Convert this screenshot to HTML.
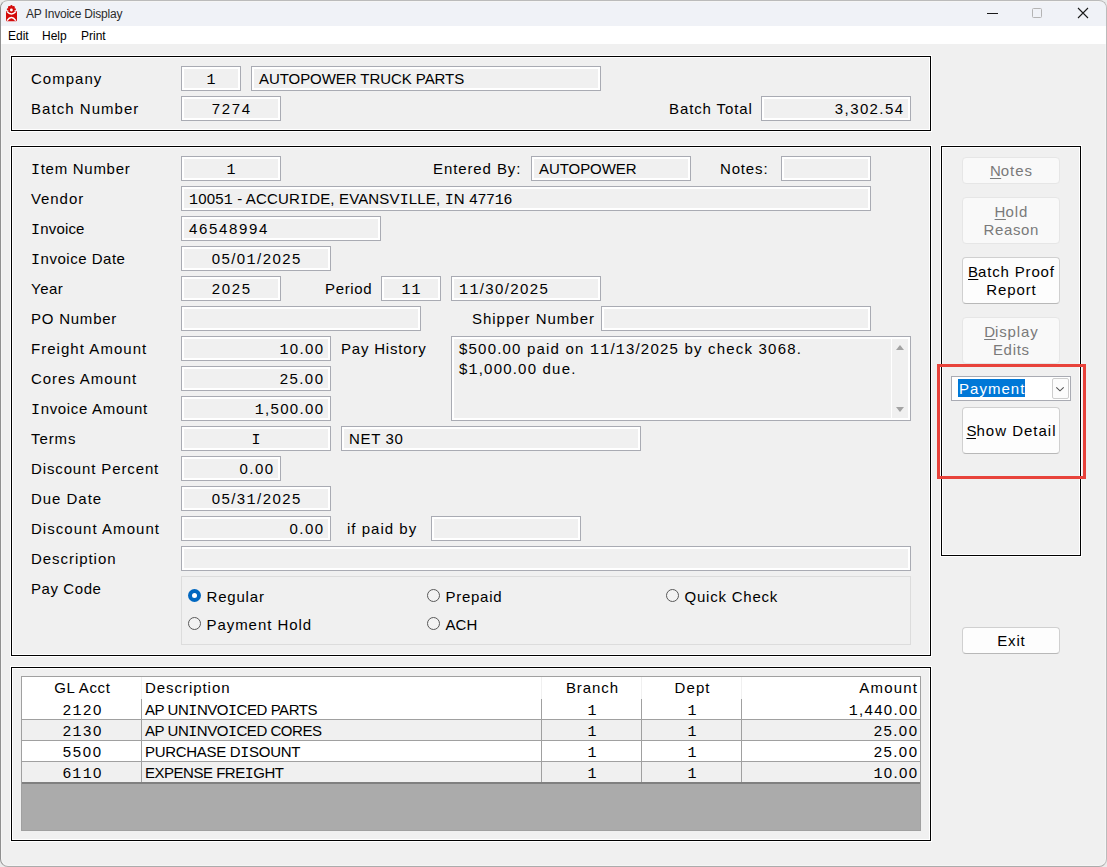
<!DOCTYPE html>
<html><head><meta charset="utf-8"><title>AP Invoice Display</title>
<style>
*{margin:0;padding:0;box-sizing:border-box}
html,body{width:1107px;height:867px;overflow:hidden;background:#ebebeb;font-family:"Liberation Sans", sans-serif;}
body{position:relative;color:#000;font-size:15px}
i.m{font-style:normal;font-family:"Liberation Mono", monospace}
u{text-decoration:underline;text-underline-offset:2px;text-decoration-thickness:1px}
#win{position:absolute;left:0;top:0;width:1107px;height:867px;border:1px solid #bbb;border-left-color:#909090;border-bottom-color:#acacac;border-radius:8px;background:#f0f0f0;overflow:hidden;box-shadow:inset 0 0 0 1px #f5f5f5}
#title{z-index:0}
#title{position:absolute;left:0;top:1px;width:100%;height:24px;background:#f0f2f7}
#menu{position:absolute;left:0;top:25px;width:100%;height:18px;background:#fff}
.tt,.mn{position:absolute;font-size:12px;line-height:14px;color:#000;white-space:nowrap}
.tt{color:#2b2b2b}
.g{position:absolute;border:1px solid #000;box-shadow:0 0 0 1px #fff, inset 0 0 0 1px #fff}
.l{position:absolute;line-height:25px;white-space:nowrap}
.f{position:absolute;border:1px solid #a9abb3;box-shadow:inset 0 0 0 2px #fff;background:#f0f0f0;line-height:23px;white-space:nowrap;overflow:hidden}
.ta{position:absolute;border:1px solid #a9abb3;box-shadow:inset 0 0 0 2px #fff;background:#f0f0f0;line-height:18px;padding:3px 0 0 7px;white-space:nowrap;overflow:hidden}
.sb{position:absolute;right:2px;top:2px;width:17px;height:79px;border-left:1px solid #fff;background:#f0f0f0}
.up,.dn{position:absolute;left:4px;width:0;height:0;border-left:4px solid transparent;border-right:4px solid transparent}
.up{top:6px;border-bottom:5px solid #a3a3a3}
.dn{top:68px;border-top:5px solid #a3a3a3}
.pc{position:absolute;border:1px solid #dcdcdc}
.rd{position:absolute;width:13px;height:13px;border-radius:50%;border:1px solid #595959;background:#f3f3f3}
.rd.on{border:none;background:#0067c0}
.rd.on::after{content:"";position:absolute;left:4px;top:4px;width:5px;height:5px;border-radius:50%;background:#fff}
.bt{position:absolute;border:1px solid #d0d0d0;border-bottom-color:#b8b8b8;border-radius:4px;background:#fdfdfd;display:flex;align-items:center;justify-content:center;text-align:center;line-height:18px;white-space:nowrap}
.bt.dis{border-color:#e6e6e6;background:#f9f9f9;color:#7a7a7a}
.dd{position:absolute;border:1px solid #a9abb3;background:#fff}
.sel{position:absolute;left:6px;top:2px;height:18px;line-height:19.6px;overflow:hidden;background:#0078d7;color:#fff;padding:0 1px;white-space:nowrap}
.ddb{position:absolute;right:1px;top:1px;width:17px;height:21px;border:1px solid #cdcdcd;border-radius:2px;background:#fcfcfc}
.ddb svg{position:absolute;left:0;top:0}
.red{position:absolute;border:3px solid #e8433b}
.grid{position:absolute;border:1px solid #a0a0a0;background:#ababab}
.gh,.gr{position:absolute;background:#fff}
.gc{position:absolute;height:21px;line-height:21px;white-space:nowrap}
</style></head><body>
<div id="win"><div id="title"></div><div id="menu"></div></div>
<svg style="position:absolute;left:4px;top:3px" width="16" height="20" viewBox="0 0 16 20">
<rect x="2" y="8" width="11" height="10.2" rx="1" fill="#d40b0b"/>
<circle cx="7.4" cy="6.3" r="3.3" fill="#d40b0b"/>
<circle cx="7.4" cy="3.1" r="1.1" fill="#d40b0b"/><circle cx="5.1" cy="4.2" r="1.1" fill="#d40b0b"/><circle cx="9.7" cy="4.2" r="1.1" fill="#d40b0b"/>
<circle cx="3.9" cy="6.3" r="1.1" fill="#d40b0b"/><circle cx="10.9" cy="6.3" r="1.1" fill="#d40b0b"/>
<circle cx="7.4" cy="7.0" r="1.4" fill="#fff"/>
<path d="M3 8.6 Q7.4 13.6 11.8 8.6" stroke="#fff" stroke-width="1.5" fill="none"/>
<path d="M3 17.6 Q7.4 11.6 11.8 17.6" stroke="#fff" stroke-width="1.5" fill="none"/>
</svg>
<div class="tt" style="left:26px;top:7px;letter-spacing:-0.2px">AP Invoice Display</div>
<div class="mn" style="left:8px;top:29px">Edit</div>
<div class="mn" style="left:42px;top:29px">Help</div>
<div class="mn" style="left:81px;top:29px">Print</div>
<div style="position:absolute;left:987px;top:13px;width:11px;height:1px;background:#1a1a1a"></div>
<div style="position:absolute;left:1032px;top:8px;width:10px;height:10px;border:1px solid #b4b4b4;border-radius:1.5px"></div>
<svg style="position:absolute;left:1077px;top:7px" width="12" height="12" viewBox="0 0 12 12"><path d="M1 1 L11 11 M11 1 L1 11" stroke="#1a1a1a" stroke-width="1.1"/></svg>
<div class="g" style="left:11px;top:56px;width:920px;height:75px"></div>
<div class="l" style="left:31px;top:66px"><span style="letter-spacing:1.02px;margin-right:-1.02px;">Company</span></div>
<div class="f" style="left:181px;top:66px;width:60px;height:25px;text-align:center;"><span style="letter-spacing:1.00px;margin-right:-1.00px;"><i class="m">1</i></span></div>
<div class="f" style="left:251px;top:66px;width:350px;height:25px;text-align:left;padding-left:7px;"><span style="letter-spacing:-0.06px;margin-right:0.06px;">AUTOPOWER TRUCK PARTS</span></div>
<div class="l" style="left:31px;top:96px"><span style="letter-spacing:1.04px;margin-right:-1.04px;">Batch Number</span></div>
<div class="f" style="left:181px;top:96px;width:100px;height:25px;text-align:center;"><span style="letter-spacing:1.66px;margin-right:-1.66px;">7274</span></div>
<div class="l" style="left:669px;top:96px"><span style="letter-spacing:0.89px;margin-right:-0.89px;">Batch Total</span></div>
<div class="f" style="left:761px;top:96px;width:150px;height:25px;text-align:right;padding-right:7px;"><span style="letter-spacing:1.39px;margin-right:-1.39px;">3,302.54</span></div>
<div class="g" style="left:11px;top:146px;width:920px;height:510px"></div>
<div class="l" style="left:31px;top:156px"><span style="letter-spacing:0.72px;margin-right:-0.72px;"><i class="m">I</i>tem Number</span></div>
<div class="f" style="left:181px;top:156px;width:100px;height:25px;text-align:center;"><span style="letter-spacing:1.00px;margin-right:-1.00px;"><i class="m">1</i></span></div>
<div class="l" style="left:433px;top:156px"><span style="letter-spacing:0.90px;margin-right:-0.90px;">Entered By:</span></div>
<div class="f" style="left:531px;top:156px;width:160px;height:25px;text-align:left;padding-left:7px;"><span style="letter-spacing:-0.06px;margin-right:0.06px;">AUTOPOWER</span></div>
<div class="l" style="left:720px;top:156px"><span style="letter-spacing:0.84px;margin-right:-0.84px;">Notes:</span></div>
<div class="f" style="left:781px;top:156px;width:90px;height:25px;text-align:left;padding-left:7px;"></div>
<div class="l" style="left:31px;top:186px"><span style="letter-spacing:0.92px;margin-right:-0.92px;">Vendor</span></div>
<div class="f" style="left:181px;top:186px;width:690px;height:25px;text-align:left;padding-left:7px;"><span style="letter-spacing:0.16px;margin-right:-0.16px;"><i class="m">1</i>005<i class="m">1</i> - ACCUR<i class="m">I</i>DE, EVANSV<i class="m">I</i>LLE, <i class="m">I</i>N 477<i class="m">1</i>6</span></div>
<div class="l" style="left:31px;top:216px"><span style="letter-spacing:0.18px;margin-right:-0.18px;"><i class="m">I</i>nvoice</span></div>
<div class="f" style="left:181px;top:216px;width:200px;height:25px;text-align:left;padding-left:7px;"><span style="letter-spacing:1.66px;margin-right:-1.66px;">46548994</span></div>
<div class="l" style="left:31px;top:246px"><span style="letter-spacing:0.52px;margin-right:-0.52px;"><i class="m">I</i>nvoice Date</span></div>
<div class="f" style="left:181px;top:246px;width:150px;height:25px;text-align:center;"><span style="letter-spacing:1.44px;margin-right:-1.44px;">05/0<i class="m">1</i>/2025</span></div>
<div class="l" style="left:31px;top:276px"><span style="letter-spacing:0.52px;margin-right:-0.52px;">Year</span></div>
<div class="f" style="left:181px;top:276px;width:100px;height:25px;text-align:center;"><span style="letter-spacing:1.66px;margin-right:-1.66px;">2025</span></div>
<div class="l" style="left:325px;top:276px"><span style="letter-spacing:0.66px;margin-right:-0.66px;">Period</span></div>
<div class="f" style="left:381px;top:276px;width:60px;height:25px;text-align:center;"><span style="letter-spacing:1.00px;margin-right:-1.00px;"><i class="m">1</i><i class="m">1</i></span></div>
<div class="f" style="left:451px;top:276px;width:150px;height:25px;text-align:left;padding-left:7px;"><span style="letter-spacing:1.37px;margin-right:-1.37px;"><i class="m">1</i><i class="m">1</i>/30/2025</span></div>
<div class="l" style="left:31px;top:306px"><span style="letter-spacing:0.77px;margin-right:-0.77px;">PO Number</span></div>
<div class="f" style="left:181px;top:306px;width:240px;height:25px;text-align:left;padding-left:7px;"></div>
<div class="l" style="left:472px;top:306px"><span style="letter-spacing:0.98px;margin-right:-0.98px;">Shipper Number</span></div>
<div class="f" style="left:601px;top:306px;width:270px;height:25px;text-align:left;padding-left:7px;"></div>
<div class="l" style="left:31px;top:336px"><span style="letter-spacing:1.04px;margin-right:-1.04px;">Freight Amount</span></div>
<div class="f" style="left:181px;top:336px;width:150px;height:25px;text-align:right;padding-right:7px;"><span style="letter-spacing:1.31px;margin-right:-1.31px;"><i class="m">1</i>0.00</span></div>
<div class="l" style="left:341px;top:336px"><span style="letter-spacing:0.80px;margin-right:-0.80px;">Pay History</span></div>
<div class="ta" style="left:451px;top:336px;width:460px;height:85px"><span style="letter-spacing:1.20px;margin-right:-1.20px;">$500.00 paid on <i class="m">1</i><i class="m">1</i>/<i class="m">1</i>3/2025 by check 3068.</span><br><span style="letter-spacing:1.20px;margin-right:-1.20px;">$<i class="m">1</i>,000.00 due.</span><div class="sb"><div class="up"></div><div class="dn"></div></div></div>
<div class="l" style="left:31px;top:366px"><span style="letter-spacing:0.91px;margin-right:-0.91px;">Cores Amount</span></div>
<div class="f" style="left:181px;top:366px;width:150px;height:25px;text-align:right;padding-right:7px;"><span style="letter-spacing:1.45px;margin-right:-1.45px;">25.00</span></div>
<div class="l" style="left:31px;top:396px"><span style="letter-spacing:0.67px;margin-right:-0.67px;"><i class="m">I</i>nvoice Amount</span></div>
<div class="f" style="left:181px;top:396px;width:150px;height:25px;text-align:right;padding-right:7px;"><span style="letter-spacing:1.31px;margin-right:-1.31px;"><i class="m">1</i>,500.00</span></div>
<div class="l" style="left:31px;top:426px"><span style="letter-spacing:0.90px;margin-right:-0.90px;">Terms</span></div>
<div class="f" style="left:181px;top:426px;width:150px;height:25px;text-align:center;"><span style="letter-spacing:-4.58px;margin-right:4.58px;"><i class="m">I</i></span></div>
<div class="f" style="left:341px;top:426px;width:300px;height:25px;text-align:left;padding-left:7px;"><span style="letter-spacing:0.67px;margin-right:-0.67px;">NET 30</span></div>
<div class="l" style="left:31px;top:456px"><span style="letter-spacing:0.87px;margin-right:-0.87px;">Discount Percent</span></div>
<div class="f" style="left:181px;top:456px;width:100px;height:25px;text-align:right;padding-right:7px;"><span style="letter-spacing:1.39px;margin-right:-1.39px;">0.00</span></div>
<div class="l" style="left:31px;top:486px"><span style="letter-spacing:0.97px;margin-right:-0.97px;">Due Date</span></div>
<div class="f" style="left:181px;top:486px;width:150px;height:25px;text-align:center;"><span style="letter-spacing:1.44px;margin-right:-1.44px;">05/3<i class="m">1</i>/2025</span></div>
<div class="l" style="left:31px;top:516px"><span style="letter-spacing:1.04px;margin-right:-1.04px;">Discount Amount</span></div>
<div class="f" style="left:181px;top:516px;width:150px;height:25px;text-align:right;padding-right:7px;"><span style="letter-spacing:1.39px;margin-right:-1.39px;">0.00</span></div>
<div class="l" style="left:347px;top:516px"><span style="letter-spacing:1.02px;margin-right:-1.02px;">if paid by</span></div>
<div class="f" style="left:431px;top:516px;width:150px;height:25px;text-align:left;padding-left:7px;"></div>
<div class="l" style="left:31px;top:546px"><span style="letter-spacing:0.95px;margin-right:-0.95px;">Description</span></div>
<div class="f" style="left:181px;top:546px;width:730px;height:25px;text-align:left;padding-left:7px;"></div>
<div class="l" style="left:31px;top:576px"><span style="letter-spacing:0.58px;margin-right:-0.58px;">Pay Code</span></div>
<div class="pc" style="left:181px;top:576px;width:730px;height:69px"></div>
<div class="rd on" style="left:188.0px;top:589.0px"></div>
<div class="l" style="left:206.5px;top:584.0px"><span style="letter-spacing:0.81px;margin-right:-0.81px;">Regular</span></div>
<div class="rd" style="left:427.0px;top:589.0px"></div>
<div class="l" style="left:445.5px;top:584.0px"><span style="letter-spacing:0.73px;margin-right:-0.73px;">Prepaid</span></div>
<div class="rd" style="left:666.0px;top:589.0px"></div>
<div class="l" style="left:684.5px;top:584.0px"><span style="letter-spacing:0.78px;margin-right:-0.78px;">Quick Check</span></div>
<div class="rd" style="left:188.0px;top:617.0px"></div>
<div class="l" style="left:206.5px;top:612.0px"><span style="letter-spacing:0.94px;margin-right:-0.94px;">Payment Hold</span></div>
<div class="rd" style="left:427.0px;top:617.0px"></div>
<div class="l" style="left:445.5px;top:612.0px"><span style="letter-spacing:0.11px;margin-right:-0.11px;">ACH</span></div>
<div class="g" style="left:941px;top:146px;width:140px;height:410px"></div>
<div class="bt dis" style="left:962px;top:157px;width:98px;height:27px"><div><u><span style="letter-spacing:0.39px;margin-right:-0.39px;">N</span></u><span style="letter-spacing:0.94px;margin-right:-0.94px;">otes</span></div></div>
<div class="bt dis" style="left:962px;top:197px;width:98px;height:47px"><div><u><span style="letter-spacing:0.45px;margin-right:-0.45px;">H</span></u><span style="letter-spacing:0.95px;margin-right:-0.95px;">old</span><br><span style="letter-spacing:0.61px;margin-right:-0.61px;">Reason</span></div></div>
<div class="bt" style="left:962px;top:257px;width:98px;height:47px"><div><u><span style="letter-spacing:0.29px;margin-right:-0.29px;">B</span></u><span style="letter-spacing:0.83px;margin-right:-0.83px;">atch Proof</span><br><span style="letter-spacing:0.90px;margin-right:-0.90px;">Report</span></div></div>
<div class="bt dis" style="left:962px;top:317px;width:98px;height:47px"><div><u><span style="letter-spacing:0.72px;margin-right:-0.72px;">D</span></u><span style="letter-spacing:0.90px;margin-right:-0.90px;">isplay</span><br><span style="letter-spacing:0.70px;margin-right:-0.70px;">Edits</span></div></div>
<div class="dd" style="left:951px;top:376px;width:120px;height:25px"><span class="sel"><span style="letter-spacing:1.02px;margin-right:-1.02px;">Payment</span></span><div class="ddb"><svg width="16" height="20" viewBox="0 0 16 20"><path d="M3.3 8.3 L7 11.8 L10.7 8.3" stroke="#505050" stroke-width="1.05" fill="none"/></svg></div></div>
<div class="bt" style="left:962px;top:407px;width:98px;height:47px"><div><u><span style="letter-spacing:-0.48px;margin-right:0.48px;">S</span></u><span style="letter-spacing:1.01px;margin-right:-1.01px;">how Detail</span></div></div>
<div class="red" style="left:937px;top:364px;width:149px;height:115px"></div>
<div class="bt" style="left:962px;top:627px;width:98px;height:27px"><div><span style="letter-spacing:0.85px;margin-right:-0.85px;">Exit</span></div></div>
<div class="g" style="left:11px;top:667px;width:920px;height:174px"></div>
<div class="grid" style="left:21px;top:676px;width:900px;height:155px"></div>
<div class="gh" style="left:22px;top:677px;width:898px;height:21px"></div>
<div class="gc" style="left:22px;top:677px;width:120px;text-align:center;"><span style="letter-spacing:0.61px;margin-right:-0.61px;">GL Acct</span></div>
<div class="gc" style="left:142px;top:677px;width:400px;text-align:left;padding-left:3px;"><span style="letter-spacing:0.95px;margin-right:-0.95px;">Description</span></div>
<div class="gc" style="left:542px;top:677px;width:100px;text-align:center;"><span style="letter-spacing:0.90px;margin-right:-0.90px;">Branch</span></div>
<div class="gc" style="left:642px;top:677px;width:100px;text-align:center;"><span style="letter-spacing:1.12px;margin-right:-1.12px;">Dept</span></div>
<div class="gc" style="left:742px;top:677px;width:178px;text-align:right;padding-right:3px;"><span style="letter-spacing:1.21px;margin-right:-1.21px;">Amount</span></div>
<div class="gr" style="left:22px;top:698px;width:898px;height:21px;background:#fff"></div>
<div class="gc" style="left:22px;top:699px;width:120px;text-align:center;"><span style="letter-spacing:1.49px;margin-right:-1.49px;">2<i class="m">1</i>20</span></div>
<div class="gc" style="left:142px;top:699px;width:400px;text-align:left;padding-left:3px;"><span style="letter-spacing:-0.45px;margin-right:0.45px;">AP UN<i class="m">I</i>NVO<i class="m">I</i>CED PARTS</span></div>
<div class="gc" style="left:542px;top:699px;width:100px;text-align:center;"><span style="letter-spacing:1.00px;margin-right:-1.00px;"><i class="m">1</i></span></div>
<div class="gc" style="left:642px;top:699px;width:100px;text-align:center;"><span style="letter-spacing:1.00px;margin-right:-1.00px;"><i class="m">1</i></span></div>
<div class="gc" style="left:742px;top:699px;width:178px;text-align:right;padding-right:3px;"><span style="letter-spacing:1.31px;margin-right:-1.31px;"><i class="m">1</i>,440.00</span></div>
<div class="gr" style="left:22px;top:720px;width:898px;height:21px;background:#f0f0f0"></div>
<div class="gc" style="left:22px;top:720px;width:120px;text-align:center;"><span style="letter-spacing:1.49px;margin-right:-1.49px;">2<i class="m">1</i>30</span></div>
<div class="gc" style="left:142px;top:720px;width:400px;text-align:left;padding-left:3px;"><span style="letter-spacing:-0.46px;margin-right:0.46px;">AP UN<i class="m">I</i>NVO<i class="m">I</i>CED CORES</span></div>
<div class="gc" style="left:542px;top:720px;width:100px;text-align:center;"><span style="letter-spacing:1.00px;margin-right:-1.00px;"><i class="m">1</i></span></div>
<div class="gc" style="left:642px;top:720px;width:100px;text-align:center;"><span style="letter-spacing:1.00px;margin-right:-1.00px;"><i class="m">1</i></span></div>
<div class="gc" style="left:742px;top:720px;width:178px;text-align:right;padding-right:3px;"><span style="letter-spacing:1.45px;margin-right:-1.45px;">25.00</span></div>
<div class="gr" style="left:22px;top:741px;width:898px;height:21px;background:#fff"></div>
<div class="gc" style="left:22px;top:741px;width:120px;text-align:center;"><span style="letter-spacing:1.66px;margin-right:-1.66px;">5500</span></div>
<div class="gc" style="left:142px;top:741px;width:400px;text-align:left;padding-left:3px;"><span style="letter-spacing:-0.30px;margin-right:0.30px;">PURCHASE D<i class="m">I</i>SOUNT</span></div>
<div class="gc" style="left:542px;top:741px;width:100px;text-align:center;"><span style="letter-spacing:1.00px;margin-right:-1.00px;"><i class="m">1</i></span></div>
<div class="gc" style="left:642px;top:741px;width:100px;text-align:center;"><span style="letter-spacing:1.00px;margin-right:-1.00px;"><i class="m">1</i></span></div>
<div class="gc" style="left:742px;top:741px;width:178px;text-align:right;padding-right:3px;"><span style="letter-spacing:1.45px;margin-right:-1.45px;">25.00</span></div>
<div class="gr" style="left:22px;top:762px;width:898px;height:21px;background:#f0f0f0"></div>
<div class="gc" style="left:22px;top:762px;width:120px;text-align:center;"><span style="letter-spacing:1.33px;margin-right:-1.33px;">6<i class="m">1</i><i class="m">1</i>0</span></div>
<div class="gc" style="left:142px;top:762px;width:400px;text-align:left;padding-left:3px;"><span style="letter-spacing:-0.48px;margin-right:0.48px;">EXPENSE FRE<i class="m">I</i>GHT</span></div>
<div class="gc" style="left:542px;top:762px;width:100px;text-align:center;"><span style="letter-spacing:1.00px;margin-right:-1.00px;"><i class="m">1</i></span></div>
<div class="gc" style="left:642px;top:762px;width:100px;text-align:center;"><span style="letter-spacing:1.00px;margin-right:-1.00px;"><i class="m">1</i></span></div>
<div class="gc" style="left:742px;top:762px;width:178px;text-align:right;padding-right:3px;"><span style="letter-spacing:1.31px;margin-right:-1.31px;"><i class="m">1</i>0.00</span></div>
<div style="position:absolute;left:22px;top:719px;width:898px;height:1px;background:#a0a0a0"></div>
<div style="position:absolute;left:22px;top:740px;width:898px;height:1px;background:#a0a0a0"></div>
<div style="position:absolute;left:22px;top:761px;width:898px;height:1px;background:#a0a0a0"></div>
<div style="position:absolute;left:22px;top:782px;width:898px;height:2px;background:#808080"></div>
<div style="position:absolute;left:141px;top:699px;width:1px;height:83px;background:#a0a0a0"></div>
<div style="position:absolute;left:141px;top:677px;width:1px;height:22px;background:#f0f0f0"></div>
<div style="position:absolute;left:541px;top:699px;width:1px;height:83px;background:#a0a0a0"></div>
<div style="position:absolute;left:541px;top:677px;width:1px;height:22px;background:#f0f0f0"></div>
<div style="position:absolute;left:641px;top:699px;width:1px;height:83px;background:#a0a0a0"></div>
<div style="position:absolute;left:641px;top:677px;width:1px;height:22px;background:#f0f0f0"></div>
<div style="position:absolute;left:741px;top:699px;width:1px;height:83px;background:#a0a0a0"></div>
<div style="position:absolute;left:741px;top:677px;width:1px;height:22px;background:#f0f0f0"></div>
</body></html>
